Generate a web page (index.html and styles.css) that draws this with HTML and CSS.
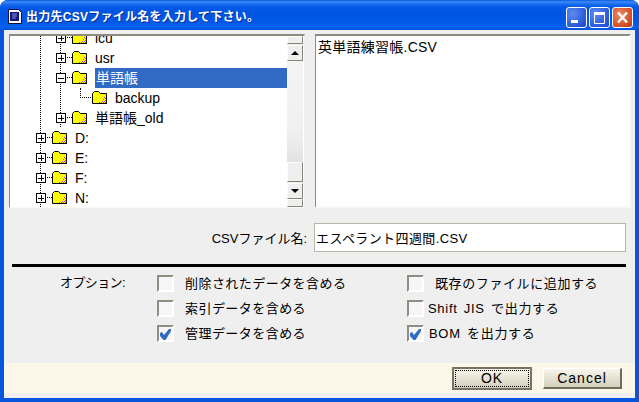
FILE: index.html
```html
<!DOCTYPE html>
<html lang="ja">
<head>
<meta charset="utf-8">
<title>出力先CSVファイル名を入力して下さい。</title>
<link rel="stylesheet" href="styles.css">
</head>
<body>
<svg class="defs" width="0" height="0" aria-hidden="true">
  <defs>
    <symbol id="folder" viewBox="0 0 15 13">
      <path d="M0.5 12.5V2.5L2.5 0.5H6.5L8.5 2.5H14.5V12.5Z" fill="#ffff00" stroke="#000" stroke-width="1"/>
      <path d="M12 6h1v1h-1zM13 7h1v1h-1zM11 8h1v1h-1zM13 9h1v1h-1zM10 10h1v1h-1zM12 10h1v1h-1zM9 11h1v1h-1zM11 11h1v1h-1zM13 11h1v1h-1zM7 11h1v1h-1z" fill="#f020d8" shape-rendering="crispEdges"/>
      <rect x="1" y="12" width="14" height="1" fill="#000"/>
    </symbol>
    <symbol id="plus" viewBox="0 0 10 10">
      <rect x="0.5" y="0.5" width="9" height="9" fill="#fff" stroke="#000"/>
      <path d="M2 5H8M5 2V8" stroke="#000" shape-rendering="crispEdges"/>
    </symbol>
    <symbol id="minus" viewBox="0 0 10 10">
      <rect x="0.5" y="0.5" width="9" height="9" fill="#fff" stroke="#000"/>
      <path d="M2 5H8" stroke="#000" shape-rendering="crispEdges"/>
    </symbol>
    <symbol id="check" viewBox="0 0 13 13">
      <path d="M1 5L3 4L5 7L10 1H12V3L6.5 12H4.5L1 8Z" fill="#316ac5"/>
    </symbol>
  </defs>
</svg>
<div class="window">
  <header class="titlebar">
    <svg class="app-icon" width="14" height="15" viewBox="0 0 14 15">
      <path d="M0.5 0.5H10.5L13.5 3.5V14.5H0.5Z" fill="#fff" stroke="#101040"/>
      <rect x="2" y="3" width="9" height="9" fill="#14147a"/>
      <path d="M4 5H9M4 7H9M4 9H8" stroke="#8a8ae0"/>
    </svg>
    <span class="title">出力先CSVファイル名を入力して下さい。</span>
    <div class="controls">
      <span class="ctl ctl-blue">
        <svg width="19" height="19" viewBox="0 0 19 19"><rect x="4" y="12" width="7" height="3" fill="#fff"/></svg>
      </span>
      <span class="ctl ctl-blue">
        <svg width="19" height="19" viewBox="0 0 19 19"><path d="M4.5 6.5H14.5V15.5H4.5Z" fill="none" stroke="#fff"/><rect x="4" y="4" width="11" height="2" fill="#fff"/></svg>
      </span>
      <span class="ctl ctl-red">
        <svg width="19" height="19" viewBox="0 0 19 19"><path d="M5 4.5L14 14.5M14 4.5L5 14.5" stroke="#fff" stroke-width="2.4"/></svg>
      </span>
    </div>
  </header>
  <main class="client">
    <section class="panes">
      <div class="tree-pane">
        <div class="tree">
          <div class="nested">
            <div class="row lvl1"><svg class="exp"><use href="#plus"/></svg><i class="dots"></i><svg class="fld"><use href="#folder"/></svg><span class="name">icu</span></div>
            <div class="row lvl1"><svg class="exp"><use href="#plus"/></svg><i class="dots"></i><svg class="fld"><use href="#folder"/></svg><span class="name">usr</span></div>
            <div class="row lvl1"><svg class="exp"><use href="#minus"/></svg><i class="dots"></i><svg class="fld"><use href="#folder"/></svg><span class="name selected">単語帳</span></div>
            <div class="row lvl2"><i class="elbow"></i><svg class="fld"><use href="#folder"/></svg><span class="name">backup</span></div>
            <div class="row lvl1"><svg class="exp"><use href="#plus"/></svg><i class="dots"></i><svg class="fld"><use href="#folder"/></svg><span class="name">単語帳_old</span></div>
          </div>
          <div class="row lvl0"><svg class="exp"><use href="#plus"/></svg><i class="dots"></i><svg class="fld"><use href="#folder"/></svg><span class="name">D:</span></div>
          <div class="row lvl0"><svg class="exp"><use href="#plus"/></svg><i class="dots"></i><svg class="fld"><use href="#folder"/></svg><span class="name">E:</span></div>
          <div class="row lvl0"><svg class="exp"><use href="#plus"/></svg><i class="dots"></i><svg class="fld"><use href="#folder"/></svg><span class="name">F:</span></div>
          <div class="row lvl0"><svg class="exp"><use href="#plus"/></svg><i class="dots"></i><svg class="fld"><use href="#folder"/></svg><span class="name">N:</span></div>
        </div>
        <div class="scrollbar">
          <span class="sb-btn sb-partial"></span>
          <span class="sb-btn sb-arrow"><i class="tri-up"></i></span>
          <span class="sb-track"></span>
          <span class="sb-btn sb-thumb"></span>
          <span class="sb-btn sb-arrow"><i class="tri-down"></i></span>
          <span class="sb-btn sb-partial"></span>
        </div>
      </div>
      <div class="file-pane">英単語練習帳.CSV</div>
    </section>
    <section class="filename">
      <label class="fn-label" for="fn">CSVファイル名:</label>
      <input class="fn-input" id="fn" type="text" value="エスペラント四週間.CSV">
    </section>
    <hr class="rule">
    <section class="options">
      <span class="opt-title">オプション:</span>
      <div class="opt"><span class="box"></span><span class="opt-text wide">削除されたデータを含める</span></div>
      <div class="opt"><span class="box"></span><span class="opt-text wide spaced">既存のファイルに追加する</span></div>
      <div class="opt col2"><span class="box"></span><span class="opt-text wide">索引データを含める</span></div>
      <div class="opt"><span class="box"></span><span class="opt-text latin">Shift JIS で出力する</span></div>
      <div class="opt col2"><span class="box"><svg width="13" height="13"><use href="#check"/></svg></span><span class="opt-text wide">管理データを含める</span></div>
      <div class="opt"><span class="box"><svg width="13" height="13"><use href="#check"/></svg></span><span class="opt-text narrow latin">BOM を出力する</span></div>
    </section>
    <footer class="footer">
      <button class="btn btn-default" type="button"><span class="focus">OK</span></button>
      <button class="btn" type="button">Cancel</button>
    </footer>
  </main>
</div>
</body>
</html>
```
FILE: styles.css
```css
* { box-sizing: border-box; }
html, body { margin: 0; padding: 0; background: #fff; }
body {
  width: 639px;
  height: 402px;
  overflow: hidden;
  font-family: "Liberation Sans", "Noto Sans CJK JP", sans-serif;
  font-size: 13px;
  color: #000;
}
.defs { position: absolute; }
.window {
  width: 639px;
  height: 402px;
  display: flex;
  flex-direction: column;
  background: #0855dd;
  border-radius: 8px 8px 0 0;
  overflow: hidden;
}
.titlebar {
  height: 30px;
  flex: none;
  display: flex;
  align-items: center;
  padding: 3px 6px 0 8px;
  background: linear-gradient(#0a5ae0 0, #3c8cf5 2px, #1a6cf0 4px, #0058e6 8px, #0054e0 14px, #0058ea 22px, #0a62f0 27px, #0250d8 30px);
}
.app-icon { flex: none; display: block; margin-right: 4px; }
.title {
  flex: 1;
  color: #fff;
  font-weight: 700;
  font-size: 12px;
  letter-spacing: .25px;
  line-height: 16px;
  white-space: nowrap;
  text-shadow: 1px 1px 0 #0a2f9a;
}
.controls { display: flex; gap: 2px; margin-top: 1px; }
.ctl {
  width: 21px;
  height: 21px;
  border: 1px solid #fff;
  border-radius: 3px;
  display: block;
}
.ctl svg { display: block; }
.ctl-blue { background: radial-gradient(circle at 30% 30%, #5f8cf0, #2f5fe0 60%, #1c45c8); }
.ctl-red { background: radial-gradient(circle at 35% 35%, #ea8a68, #d9542c 60%, #b83a12); }

.client {
  flex: 1;
  margin: 0 4px 4px;
  background: #efefef;
  display: flex;
  flex-direction: column;
  min-height: 0;
}
.panes {
  display: flex;
  height: 174px;
  margin: 4px 4px 0 5px;
  gap: 10px;
  flex: none;
}
.tree-pane, .file-pane {
  background: #fff;
  border-top: 2px solid #8b8b7e;
  border-left: 1px solid #8b8b7e;
  border-right: 2px solid #f8f8f8;
  border-bottom: 2px solid #f8f8f8;
}
.tree-pane {
  width: 296px;
  flex: none;
  display: flex;
  overflow: hidden;
  border-right: 1px solid #efefef;
  border-bottom: 1px solid #fafafa;
}
.file-pane {
  flex: 1;
  padding: 1px 0 0 2px;
  font-size: 14px;
  letter-spacing: .25px;
  line-height: 20px;
  white-space: nowrap;
}
.tree {
  flex: 1;
  min-width: 0;
  margin-top: -8px;
  padding-top: 0;
  font-size: 14px;
  background-image: repeating-linear-gradient(to bottom, #000 0 1px, transparent 1px 2px);
  background-size: 1px 100%;
  background-position: 30px 0;
  background-repeat: no-repeat;
}
.nested {
  background-image: repeating-linear-gradient(to bottom, #000 0 1px, transparent 1px 2px);
  background-size: 1px 100%;
  background-position: 50px 0;
  background-repeat: no-repeat;
}
.row { height: 20px; display: flex; align-items: center; }
.lvl0 { padding-left: 26px; }
.lvl1 { padding-left: 46px; }
.lvl2 { padding-left: 70px; }
.exp { width: 10px; height: 10px; flex: none; }
.dots {
  width: 6px;
  height: 1px;
  flex: none;
  margin-top: -1px;
  background-image: repeating-linear-gradient(to right, transparent 0 1px, #000 1px 2px);
}
.fld { width: 15px; height: 13px; flex: none; margin-top: -2px; }
.name {
  margin-left: 8px;
  line-height: 20px;
  white-space: nowrap;
}
.selected {
  flex: 1;
  align-self: stretch;
  background: #316ac5;
  color: #fff;
  padding-left: 1px;
}
.elbow {
  width: 11px;
  height: 10px;
  flex: none;
  align-self: flex-start;
  margin-right: 1px;
  border-left: 1px dotted #000;
  border-bottom: 1px dotted #000;
}
.scrollbar {
  width: 16px;
  flex: none;
  margin-right: 1px;
  display: flex;
  flex-direction: column;
  background: #efefef;
}
.sb-btn {
  display: flex;
  align-items: center;
  justify-content: center;
  flex: none;
  background: #efefef;
  border: 1px solid;
  border-color: #fcfcfc #85857a #85857a #fcfcfc;
}
.sb-partial { height: 8px; }
.sb-arrow { height: 16px; margin-top: 1px; }
.sb-thumb { height: 20px; }
.sb-track { flex: 1; margin-top: 0; background: linear-gradient(#f4f4f4, #f0f0f0 70%, #e2e2e2); }
.tri-up, .tri-down { width: 0; height: 0; border-left: 4px solid transparent; border-right: 4px solid transparent; }
.tri-up { border-bottom: 4px solid #000; }
.tri-down { border-top: 4px solid #000; }

.filename {
  display: flex;
  align-items: center;
  justify-content: flex-end;
  margin: 15px 9px 0 0;
  flex: none;
}
.fn-label { margin-right: 7px; white-space: nowrap; }
.fn-input {
  width: 312px;
  height: 29px;
  border: 1px solid #b8b8aa;
  background: #fff;
  padding: 0 1px;
  font: inherit;
  letter-spacing: .4px;
  color: #000;
  outline: none;
}
.rule {
  height: 3px;
  border: 0;
  margin: 12px 9px 0 8px;
  background: #000;
  flex: none;
}
.options {
  display: grid;
  grid-template-columns: 153px 250px 1fr;
  grid-auto-rows: 25px;
  margin-top: 4px;
  flex: none;
}
.opt-title { padding-left: 56px; line-height: 23px; white-space: nowrap; letter-spacing: -.6px; }
.opt { display: flex; align-items: center; }
.col2 { grid-column: 2; }
.box {
  width: 17px;
  height: 17px;
  flex: none;
  background: #f6f6f6;
  border: 2px solid;
  border-color: #8e8e82 #fff #fff #8e8e82;
  display: block;
  padding: 0;
}
.box svg { display: block; margin: 1px 0 0 0; }
.opt-text { margin-left: 4px; padding-bottom: 2px; white-space: nowrap; letter-spacing: .45px; }
.opt-text.wide { margin-left: 11px; }
.opt-text.narrow { margin-left: 5px; }
.opt-text.spaced { letter-spacing: .6px; }
.opt-text.latin { letter-spacing: .7px; word-spacing: 2px; }
.footer {
  margin-top: auto;
  margin-bottom: 5px;
  height: 30px;
  flex: none;
  background: #fbf8ea;
  display: flex;
  justify-content: flex-end;
  align-items: center;
  gap: 11px;
  padding: 0 13px 0 0;
}
.btn {
  width: 79px;
  height: 21px;
  margin: 0;
  padding: 0;
  font-family: inherit;
  font-size: 14px;
  letter-spacing: 1px;
  color: #000;
  border: 1px solid;
  border-color: #fff #6f6d5c #6f6d5c #fff;
  border-width: 1px 2px 2px 1px;
  background: linear-gradient(#f8f6ec, #d2cfba);
}
.btn-default {
  width: 80px;
  height: 23px;
  border: 2px solid #76745f;
  padding: 1px;
}
.focus {
  display: block;
  height: 100%;
  line-height: 15px;
  border: 1px dotted #000;
}
```
